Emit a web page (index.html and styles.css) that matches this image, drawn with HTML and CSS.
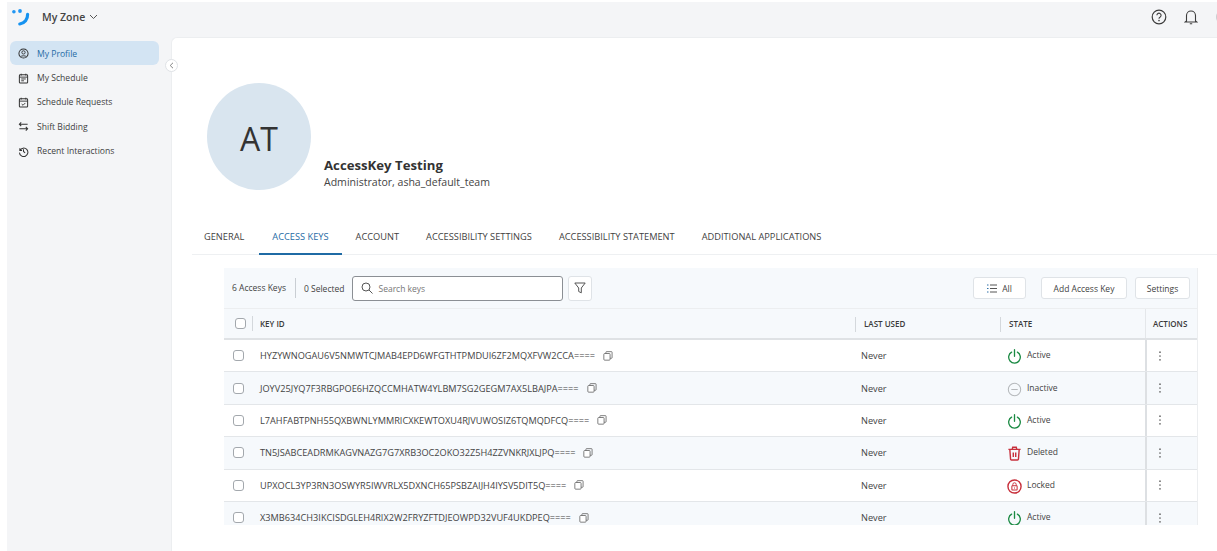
FILE: index.html
```html
<!DOCTYPE html>
<html lang="en">
  <head>
    <meta charset="UTF-8" />
    <meta name="viewport" content="width=device-width, initial-scale=1.0" />
    <title>My Zone</title>
    <link rel="stylesheet" href="styles.css">
  </head>
  <body>
    <svg class="icon-defs" width="0" height="0" aria-hidden="true">
      <symbol id="i-copy" viewBox="0 0 12 12">
        <rect x="1" y="3" width="7.5" height="8" rx="1" fill="#fff" stroke="currentColor" />
        <path d="M3.5 3V1.500a.7.7 0 0 1 .7-.7h6a.7.7 0 0 1 .7.7V8a.7.7 0 0 1-.7.7H8.500" fill="none" stroke="currentColor" />
      </symbol>
      <symbol id="i-power" viewBox="0 0 16 16">
        <path d="M4.900 3.400a6.200 6.200 0 1 0 6.200 0M8 .8v7" fill="none" stroke="currentColor" stroke-width="1.400" stroke-linecap="round" />
      </symbol>
      <symbol id="i-minus" viewBox="0 0 16 16">
        <circle cx="8" cy="8" r="6.600" fill="none" stroke="currentColor" stroke-width="1.100" />
        <path d="M4.600 8h6.800" stroke="currentColor" stroke-width="1.100" />
      </symbol>
      <symbol id="i-trash" viewBox="0 0 16 16">
        <path d="M1.500 3.600h13M5.600 3.400l.5-2h3.800l.5 2M3 3.800l.8 10.200a1 1 0 0 0 1 .9h6.400a1 1 0 0 0 1-.9L13 3.800M6.700 7v4.800M9.300 7v4.800" fill="none" stroke="currentColor" stroke-width="1.500" />
      </symbol>
      <symbol id="i-lock" viewBox="0 0 16 16">
        <circle cx="8" cy="8" r="7" fill="none" stroke="currentColor" stroke-width="1.500" />
        <rect x="5.200" y="7.200" width="5.600" height="4.600" rx=".6" fill="none" stroke="currentColor" stroke-width="1.100" />
        <path d="M6.200 7.200V5.800a1.800 1.800 0 0 1 3.600 0v1.400M8 9v1.200" fill="none" stroke="currentColor" stroke-width="1" />
      </symbol>
      <symbol id="i-dots" viewBox="0 0 4 10">
        <circle cx="2" cy="1.200" r=".85" fill="currentColor" />
        <circle cx="2" cy="5" r=".85" fill="currentColor" />
        <circle cx="2" cy="8.800" r=".85" fill="currentColor" />
      </symbol>
    </svg>

    <div class="app">
      <header class="topbar">
        <svg class="logo" width="18" height="19" viewBox="0 0 18 19">
          <circle cx="1.900" cy="3.800" r="1.800" fill="#2196f3" />
          <circle cx="8" cy="3" r="1.900" fill="#2196f3" />
          <path d="M15.600 6.400c.2 4.800-3 8.800-7.800 9.600" fill="none" stroke="#1592f0" stroke-width="3.200" stroke-linecap="round" />
        </svg>
        <span class="zone-name">My Zone</span>
        <svg class="zone-caret" width="9" height="6" viewBox="0 0 9 6">
          <path d="M1 1l3.500 3.500L8 1" fill="none" stroke="#555" stroke-width="1" />
        </svg>
        <div class="topbar-actions">
          <svg width="16" height="16" viewBox="0 0 16 16">
            <circle cx="8" cy="8" r="6.800" fill="none" stroke="#3c3c3c" stroke-width="1.200" />
            <path d="M5.900 6.300a2.100 2.100 0 1 1 3.300 1.700c-.8.5-1.200.9-1.200 1.700" fill="none" stroke="#3c3c3c" stroke-width="1.100" />
            <circle cx="8" cy="11.600" r=".8" fill="#3c3c3c" />
          </svg>
          <svg width="14" height="16" viewBox="0 0 14 16">
            <path d="M2.500 12V6.500a4.500 4.500 0 0 1 9 0V12l1.200 1H1.300zM5.800 14.800h2.400" fill="none" stroke="#3c3c3c" stroke-width="1.100" />
          </svg>
          <span class="user-dot"></span>
        </div>
      </header>

      <div class="body-row">
        <nav class="sidebar">
          <a class="nav-item nav-item-active">
            <svg class="nav-icon" viewBox="0 0 12 12"><circle cx="6" cy="6" r="5" fill="none" stroke="currentColor" stroke-width="1.100" /><circle cx="6" cy="4.800" r="1.800" fill="none" stroke="currentColor" /><path d="M2.800 9.600c.8-1.500 5.600-1.500 6.400 0" fill="none" stroke="currentColor" /></svg>
            My Profile
          </a>
          <a class="nav-item">
            <svg class="nav-icon" viewBox="0 0 12 12"><rect x="1.500" y="2" width="9" height="9" rx="1" fill="none" stroke="currentColor" stroke-width="1.100" /><path d="M3.500.8v2M8.500.8v2M1.500 4.500h9M3.500 6.500h5M3.500 8.500h3" stroke="currentColor" fill="none" /></svg>
            My Schedule
          </a>
          <a class="nav-item">
            <svg class="nav-icon" viewBox="0 0 12 12"><rect x="1.500" y="2" width="9" height="9" rx="1" fill="none" stroke="currentColor" stroke-width="1.100" /><path d="M3.500.8v2M8.500.8v2M1.500 4.500h9M4 7.700l1.500 1.300L8 6.500" stroke="currentColor" fill="none" /></svg>
            Schedule Requests
          </a>
          <a class="nav-item">
            <svg class="nav-icon" viewBox="0 0 12 12"><path d="M3.500 1.500L1.500 3.500l2 2M1.500 3.500h9M8.500 6.500l2 2-2 2M10.500 8.500h-9" stroke="currentColor" stroke-width="1.100" fill="none" /></svg>
            Shift Bidding
          </a>
          <a class="nav-item">
            <svg class="nav-icon" viewBox="0 0 12 12"><path d="M2 2.500v2.400h2.400M2.100 4.800a4.600 4.600 0 1 1-.5 2.400M6 3.500V6l1.800 1.400" stroke="currentColor" stroke-width="1.100" fill="none" /></svg>
            Recent Interactions
          </a>
        </nav>

        <main class="panel">
          <button class="collapse-btn">
            <svg width="5" height="7" viewBox="0 0 5 7"><path d="M4 .8L1.200 3.500 4 6.200" fill="none" stroke="#777" stroke-width=".9" /></svg>
          </button>

          <section class="profile">
            <div class="avatar">AT</div>
            <div class="profile-info">
              <h1>AccessKey Testing</h1>
              <p>Administrator, asha_default_team</p>
            </div>
          </section>

          <div class="tabs">
            <a class="tab">GENERAL</a>
            <a class="tab tab-active">ACCESS KEYS</a>
            <a class="tab">ACCOUNT</a>
            <a class="tab">ACCESSIBILITY SETTINGS</a>
            <a class="tab">ACCESSIBILITY STATEMENT</a>
            <a class="tab">ADDITIONAL APPLICATIONS</a>
          </div>

          <section class="keys">
            <div class="toolbar">
              <span class="count count-first">6 Access Keys</span>
              <span class="count">0 Selected</span>
              <label class="search">
                <svg width="12" height="12" viewBox="0 0 12 12"><circle cx="5" cy="5" r="4" fill="none" stroke="#555" /><path d="M8 8l3.500 3.500" stroke="#555" /></svg>
                <input type="text" placeholder="Search keys">
              </label>
              <button class="btn btn-filter">
                <svg width="12" height="12" viewBox="0 0 12 12"><path d="M.8 1h10.400L7.300 6v4.800L4.700 9.500V6z" fill="none" stroke="#555" /></svg>
              </button>
              <button class="btn btn-all">
                <svg width="10" height="9" viewBox="0 0 10 9"><path d="M0 1h1.500M0 4.500h1.500M0 8h1.500" stroke="#2c6ea6" /><path d="M3 1h7M3 4.500h7M3 8h7" stroke="#555" /></svg>
                All
              </button>
              <button class="btn btn-add">Add Access Key</button>
              <button class="btn btn-settings">Settings</button>
            </div>

            <div class="grid-row grid-head">
              <div class="cell cell-key">
                <span class="check check-head"></span>
                <span class="head-label head-label-key">KEY ID</span>
              </div>
              <div class="cell cell-used"><span class="head-label">LAST USED</span></div>
              <div class="cell cell-state"><span class="head-label">STATE</span></div>
              <div class="cell cell-actions"><span class="head-label">ACTIONS</span></div>
            </div>

            <div class="grid-row">
              <div class="cell cell-key"><span class="check"></span><span class="key-id">HYZYWNOGAU6V5NMWTCJMAB4EPD6WFGTHTPMDUI6ZF2MQXFVW2CCA====</span><svg class="copy"><use href="#i-copy" /></svg></div>
              <div class="cell cell-used">Never</div>
              <div class="cell cell-state"><svg class="state-icon state-green"><use href="#i-power" /></svg><span class="state-label">Active</span></div>
              <div class="cell cell-actions"><svg class="dots"><use href="#i-dots" /></svg></div>
            </div>
            <div class="grid-row grid-row-alt">
              <div class="cell cell-key"><span class="check"></span><span class="key-id">JOYV25JYQ7F3RBGPOE6HZQCCMHATW4YLBM7SG2GEGM7AX5LBAJPA====</span><svg class="copy"><use href="#i-copy" /></svg></div>
              <div class="cell cell-used">Never</div>
              <div class="cell cell-state"><svg class="state-icon state-grey"><use href="#i-minus" /></svg><span class="state-label">Inactive</span></div>
              <div class="cell cell-actions"><svg class="dots"><use href="#i-dots" /></svg></div>
            </div>
            <div class="grid-row">
              <div class="cell cell-key"><span class="check"></span><span class="key-id">L7AHFABTPNH55QXBWNLYMMRICXKEWTOXU4RJVUWOSIZ6TQMQDFCQ====</span><svg class="copy"><use href="#i-copy" /></svg></div>
              <div class="cell cell-used">Never</div>
              <div class="cell cell-state"><svg class="state-icon state-green"><use href="#i-power" /></svg><span class="state-label">Active</span></div>
              <div class="cell cell-actions"><svg class="dots"><use href="#i-dots" /></svg></div>
            </div>
            <div class="grid-row grid-row-alt">
              <div class="cell cell-key"><span class="check"></span><span class="key-id">TN5JSABCEADRMKAGVNAZG7G7XRB3OC2OKO32Z5H4ZZVNKRJXLJPQ====</span><svg class="copy"><use href="#i-copy" /></svg></div>
              <div class="cell cell-used">Never</div>
              <div class="cell cell-state"><svg class="state-icon state-red"><use href="#i-trash" /></svg><span class="state-label">Deleted</span></div>
              <div class="cell cell-actions"><svg class="dots"><use href="#i-dots" /></svg></div>
            </div>
            <div class="grid-row">
              <div class="cell cell-key"><span class="check"></span><span class="key-id">UPXOCL3YP3RN3OSWYR5IWVRLX5DXNCH65PSBZAIJH4IYSV5DIT5Q====</span><svg class="copy"><use href="#i-copy" /></svg></div>
              <div class="cell cell-used">Never</div>
              <div class="cell cell-state"><svg class="state-icon state-red"><use href="#i-lock" /></svg><span class="state-label">Locked</span></div>
              <div class="cell cell-actions"><svg class="dots"><use href="#i-dots" /></svg></div>
            </div>
            <div class="grid-row grid-row-alt">
              <div class="cell cell-key"><span class="check"></span><span class="key-id">X3MB634CH3IKCISDGLEH4RIX2W2FRYZFTDJEOWPD32VUF4UKDPEQ====</span><svg class="copy"><use href="#i-copy" /></svg></div>
              <div class="cell cell-used">Never</div>
              <div class="cell cell-state"><svg class="state-icon state-green"><use href="#i-power" /></svg><span class="state-label">Active</span></div>
              <div class="cell cell-actions"><svg class="dots"><use href="#i-dots" /></svg></div>
            </div>
          </section>
        </main>
      </div>
    </div>
  </body>
</html>
```

FILE: styles.css
```css
* {
  box-sizing: border-box;
}

html, body {
  margin: 0;
  height: 100%;
  overflow: hidden;
  background-color: #ffffff;
}

body {
  font-family: "Open Sans", "Noto Sans", sans-serif;
  color: #3d3d3d;
}

.icon-defs {
  position: absolute;
}

.app {
  margin: 2px 0 0 7px;
  height: 549px;
  background-color: #f4f5f7;
  display: flex;
  flex-direction: column;
}

/* Верхняя панель */
.topbar {
  height: 35px;
  display: flex;
  align-items: center;
  padding: 0 0 5px 5px;
  flex-shrink: 0;
  overflow: hidden;
}

.logo {
  margin-right: 12px;
}

.zone-name {
  font-size: 10.5px;
  font-weight: 600;
  color: #444;
  margin-right: 4px;
}

.topbar-actions {
  margin-left: auto;
  display: flex;
  align-items: center;
  gap: 16.5px;
  margin-right: -13px;
}

.user-dot {
  width: 14px;
  height: 14px;
  margin-left: 2px;
  border-radius: 50%;
  background-color: #c9ccd0;
  flex-shrink: 0;
}

.body-row {
  flex: 1;
  display: flex;
  min-height: 0;
}

/* Меню слева */
.sidebar {
  width: 164px;
  flex-shrink: 0;
  padding: 4px 12px 0 3px;
}

.nav-item {
  height: 24.4px;
  display: flex;
  align-items: center;
  gap: 8px;
  padding: 1px 0 0 8px;
  font-size: 8.6px;
  color: #3f3f3f;
  border-radius: 6px;
  white-space: nowrap;
}

.nav-item-active {
  background-color: #d3e4f3;
  color: #1f6ba5;
}

.nav-icon {
  width: 11px;
  height: 11px;
  color: #333;
  flex-shrink: 0;
}

/* Основная область */
.panel {
  position: relative;
  flex: 1;
  min-width: 0;
  background-color: #ffffff;
  border-top-left-radius: 6px;
  border-left: 1px solid #eceef0;
  border-top: 1px solid #eceef0;
  padding: 45px 0 0 20px;
}

.collapse-btn {
  position: absolute;
  left: -7px;
  top: 21px;
  width: 13px;
  height: 13px;
  padding: 0;
  border: 1px solid #dfe2e6;
  border-radius: 50%;
  background-color: #ffffff;
  display: flex;
  align-items: center;
  justify-content: center;
}

.profile {
  display: flex;
  align-items: flex-end;
  gap: 13px;
  margin-left: 15px;
  height: 107px;
}

.avatar {
  width: 104px;
  height: 107px;
  padding-top: 3px;
  border-radius: 50%;
  background-color: #d9e5ef;
  display: flex;
  align-items: center;
  justify-content: center;
  font-size: 32px;
  color: #333;
}

.profile-info h1 {
  margin: 0;
  font-size: 13.2px;
  line-height: 18px;
  font-weight: 700;
  color: #333;
}

.profile-info p {
  margin: 0;
  font-size: 10.55px;
  line-height: 16px;
  color: #444;
}

/* Вкладки */
.tabs {
  display: flex;
  margin-top: 30px;
  height: 35px;
  border-bottom: 1px solid #eef0f2;
}

.tab {
  padding: 0 13.5px;
  font-size: 9.25px;
  line-height: 34px;
  color: #3f3f3f;
  white-space: nowrap;
}

.tab:first-child {
  padding: 0 14.5px 0 12px;
}

.tab-active {
  color: #1f6ba5;
  height: 35px;
  border-bottom: 2px solid #1f6ba5;
}

/* Таблица ключей */
.keys {
  width: 974px;
  height: 257px;
  margin: 13px 0 0 32px;
  overflow: hidden;
  background-color: #ffffff;
  border-right: 1px solid #eceef0;
}

.toolbar {
  height: 41px;
  background-color: #f6f9fc;
  display: flex;
  align-items: center;
  padding: 0 7px 0 8px;
  border-bottom: 1px solid #eceef0;
}

.count {
  font-size: 8.5px;
  color: #3f3f3f;
  white-space: nowrap;
}

.count-first {
  padding-right: 9px;
  margin-right: 8px;
  border-right: 1px solid #c9ced3;
  line-height: 20px;
}

.search {
  width: 211px;
  height: 25px;
  margin-left: 8px;
  border: 1px solid #8b8f94;
  border-radius: 3px;
  background-color: #ffffff;
  display: flex;
  align-items: center;
  gap: 3px;
  padding-left: 8px;
}

.search input {
  border: none;
  outline: none;
  flex: 1;
  min-width: 0;
  font-family: inherit;
  font-size: 8.5px;
  color: #3f3f3f;
  background: transparent;
}

.search input::placeholder {
  color: #777;
  opacity: 1;
}

.btn {
  height: 22px;
  border: 1px solid #dfe3e7;
  border-radius: 3px;
  background-color: #ffffff;
  font-family: inherit;
  font-size: 8.5px;
  color: #3f3f3f;
  padding: 0;
  display: flex;
  align-items: center;
  justify-content: center;
  white-space: nowrap;
}

.btn-filter {
  width: 24px;
  height: 25px;
  margin-left: 5px;
}

.btn-all {
  width: 53px;
  margin-left: auto;
  gap: 5px;
}

.btn-add {
  width: 86px;
  margin-left: 15px;
}

.btn-settings {
  width: 55px;
  margin-left: 8px;
}

.grid-row {
  height: 32.4px;
  display: grid;
  grid-template-columns: 631px 145px 145px 52px;
  font-size: 9.2px;
  color: #444;
  border-bottom: 1px solid #e3e6e9;
}

.grid-row-alt {
  background-color: #f6f9fc;
}

.grid-head {
  height: 31px;
  background-color: #f6f9fc;
  border-bottom: 2px solid #dfe2e5;
}

.cell {
  display: flex;
  align-items: center;
  padding-left: 6px;
  min-width: 0;
}

.cell-key {
  padding-left: 9px;
}

.cell-actions {
  border-left: 2px solid #dde0e3;
  padding-left: 11px;
}

.grid-head .cell-used, .grid-head .cell-state {
  position: relative;
  padding-left: 9px;
}

.grid-head .cell-used::before, .grid-head .cell-state::before {
  content: "";
  position: absolute;
  left: 0;
  top: 8px;
  height: 15px;
  width: 1px;
  background-color: #d4d8dc;
}

.grid-head .cell-actions {
  border-left: 1px solid #e4e7ea;
  padding-left: 7px;
}

.head-label {
  font-size: 8px;
  font-weight: 600;
  color: #3a3a3a;
}

.head-label-key {
  border-left: 1px solid #d4d8dc;
  padding-left: 7px;
  line-height: 15px;
}

.check {
  width: 11px;
  height: 11px;
  border: 1px solid #a3a8ad;
  border-radius: 3px;
  background-color: #ffffff;
  margin-right: 16px;
  flex-shrink: 0;
}

.check-head {
  margin: 0 6px 0 2px;
}

.key-id {
  white-space: nowrap;
}

.copy {
  width: 10px;
  height: 10px;
  margin-left: 8px;
  color: #666;
  flex-shrink: 0;
}

.state-icon {
  width: 15px;
  height: 15px;
  margin: 2px 5px 0 1px;
  flex-shrink: 0;
}

.state-label {
  font-size: 8.5px;
  margin-bottom: 2px;
}

.state-green {
  color: #1b8a43;
}

.state-grey {
  color: #b5b8bb;
}

.state-red {
  color: #c8303c;
}

.dots {
  width: 4px;
  height: 10px;
  color: #666;
}
```
